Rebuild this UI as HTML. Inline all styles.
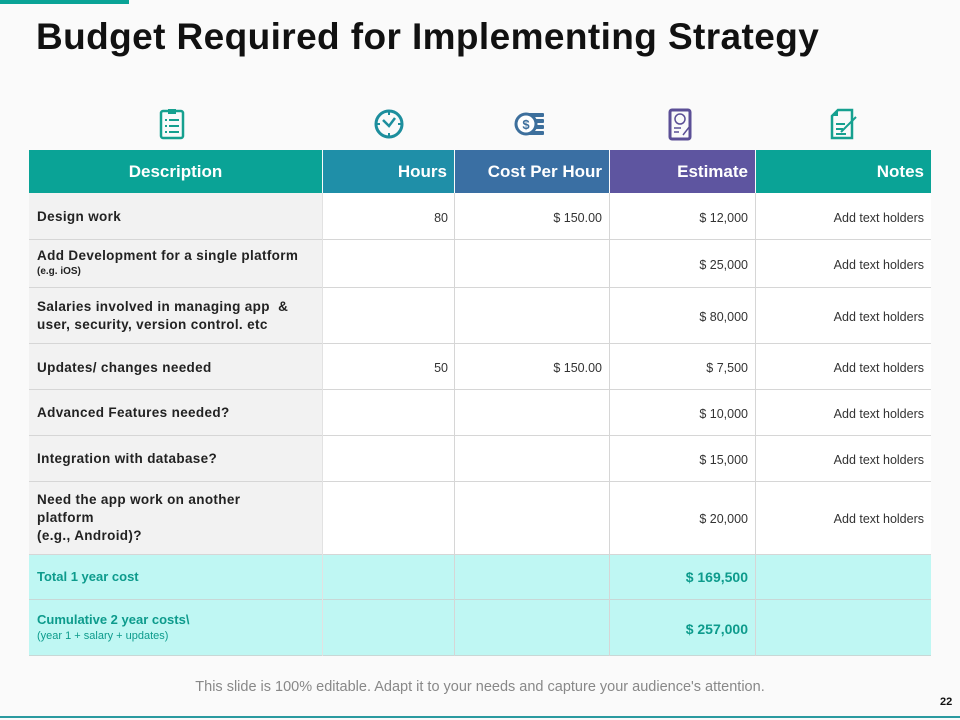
<!DOCTYPE html>
<html><head><meta charset="utf-8">
<style>
*{margin:0;padding:0;box-sizing:border-box}
body{width:960px;height:720px;position:relative;overflow:hidden;background:#fafafa;font-family:"Liberation Sans",sans-serif;}
.a{position:absolute}
.h{position:absolute;top:150px;height:43px;color:#fff;font-weight:bold;font-size:17px;line-height:43px}
.d{position:absolute;left:29px;width:293px;background:#f2f2f2;border-bottom:1px solid #d6d6d6}
.r{position:absolute;left:322px;width:609px;background:#fff;border-bottom:1px solid #d6d6d6}
.v{position:absolute;width:1px;background:#d6d6d6}
.dt{position:absolute;left:37px;font-size:13.5px;font-weight:bold;color:#222;line-height:18px;letter-spacing:0.35px;white-space:nowrap}
.num{position:absolute;font-size:12.5px;color:#333;text-align:right}
</style></head><body>
<div class="a" style="left:0;top:0;width:129px;height:4px;background:#0aa396"></div>
<div class="a" style="left:36px;top:16px;font-size:37px;font-weight:bold;color:#111;letter-spacing:0.4px">Budget Required for Implementing Strategy</div>

<svg class="a" style="left:158px;top:108px" width="28" height="32" viewBox="0 0 28 32"><rect x="3" y="3" width="22" height="27" rx="2" fill="none" stroke="#16a08f" stroke-width="2.5"/><rect x="10" y="1" width="8" height="5" fill="#16a08f"/><g stroke="#16a08f" stroke-width="2"><line x1="7" y1="12" x2="9" y2="12"/><line x1="11" y1="12" x2="21" y2="12"/><line x1="7" y1="18" x2="9" y2="18"/><line x1="11" y1="18" x2="21" y2="18"/><line x1="7" y1="24" x2="9" y2="24"/><line x1="11" y1="24" x2="21" y2="24"/></g></svg>
<svg class="a" style="left:373px;top:108px" width="32" height="32" viewBox="0 0 32 32"><circle cx="16" cy="16" r="13" fill="none" stroke="#1d8e9d" stroke-width="3"/><path d="M10 12 L16 18 L22 10" fill="none" stroke="#1d8e9d" stroke-width="2.5"/><g stroke="#1d8e9d" stroke-width="2"><line x1="16" y1="4" x2="16" y2="7"/><line x1="4" y1="16" x2="7" y2="16"/><line x1="25" y1="16" x2="28" y2="16"/><line x1="16" y1="25" x2="16" y2="28"/></g></svg>
<svg class="a" style="left:514px;top:110px" width="32" height="28" viewBox="0 0 32 28"><g fill="#3d6f9c"><rect x="14" y="3" width="16" height="4" rx="1"/><rect x="16" y="9" width="14" height="4" rx="1"/><rect x="16" y="15" width="14" height="4" rx="1"/><rect x="14" y="21" width="16" height="4" rx="1"/></g><circle cx="12" cy="14" r="10" fill="#fff" stroke="#3d6f9c" stroke-width="3"/><text x="12" y="19" font-size="13" font-weight="bold" fill="#3d6f9c" text-anchor="middle" font-family="Liberation Sans">$</text></svg>
<svg class="a" style="left:667px;top:108px" width="28" height="34" viewBox="0 0 28 34"><rect x="3" y="2" width="20" height="29" rx="2" fill="none" stroke="#5b4f96" stroke-width="3"/><circle cx="13" cy="11" r="5" fill="none" stroke="#5b4f96" stroke-width="1.5"/><g stroke="#5b4f96" stroke-width="1.5"><line x1="7" y1="20" x2="14" y2="20"/><line x1="7" y1="24" x2="12" y2="24"/><line x1="16" y1="27" x2="23" y2="18"/></g></svg>
<svg class="a" style="left:829px;top:108px" width="30" height="32" viewBox="0 0 30 32"><path d="M9 2 H23 V30 H3 V8 Z" fill="none" stroke="#16a08f" stroke-width="2.5"/><path d="M3 8 H9 V2" fill="#16a08f"/><g stroke="#16a08f" stroke-width="2"><line x1="7" y1="16" x2="16" y2="16"/><line x1="7" y1="21" x2="14" y2="21"/><line x1="7" y1="26" x2="17" y2="26"/><line x1="12" y1="24" x2="27" y2="9"/></g></svg>

<div class="h" style="left:29px;width:293px;background:#0aa396;text-align:center">Description</div>
<div class="h" style="left:323px;width:131px;background:#1f8fa8;text-align:right;padding-right:7px">Hours</div>
<div class="h" style="left:455px;width:154px;background:#3a6fa3;text-align:right;padding-right:7px">Cost Per Hour</div>
<div class="h" style="left:610px;width:145px;background:#5e55a0;text-align:right;padding-right:7px">Estimate</div>
<div class="h" style="left:756px;width:175px;background:#0aa396;text-align:right;padding-right:7px">Notes</div>

<div class="d" style="top:193px;height:47px"></div><div class="r" style="top:193px;height:47px"></div>
<div class="d" style="top:240px;height:48px"></div><div class="r" style="top:240px;height:48px"></div>
<div class="d" style="top:288px;height:56px"></div><div class="r" style="top:288px;height:56px"></div>
<div class="d" style="top:344px;height:46px"></div><div class="r" style="top:344px;height:46px"></div>
<div class="d" style="top:390px;height:46px"></div><div class="r" style="top:390px;height:46px"></div>
<div class="d" style="top:436px;height:46px"></div><div class="r" style="top:436px;height:46px"></div>
<div class="d" style="top:482px;height:73px"></div><div class="r" style="top:482px;height:73px"></div>
<div class="a" style="left:29px;top:555px;width:902px;height:45px;background:#bff7f3;border-bottom:1px solid #c8d8d6"></div>
<div class="a" style="left:29px;top:600px;width:902px;height:56px;background:#bff7f3;border-bottom:1px solid #c8d8d6"></div>
<div class="v" style="left:322px;top:193px;height:463px;background:#e2e2e2"></div>
<div class="v" style="left:454px;top:193px;height:463px"></div>
<div class="v" style="left:609px;top:193px;height:463px"></div>
<div class="v" style="left:755px;top:193px;height:463px"></div>

<div class="dt" style="top:208px">Design work</div>
<div class="dt" style="top:247px">Add Development for a single platform<br><span style="font-size:10px;line-height:14px;display:block;letter-spacing:0">(e.g. iOS)</span></div>
<div class="dt" style="top:298px">Salaries involved in managing app &nbsp;&amp;<br>user, security, version control. etc</div>
<div class="dt" style="top:359px">Updates/ changes needed</div>
<div class="dt" style="top:404px">Advanced Features needed?</div>
<div class="dt" style="top:450px">Integration with database?</div>
<div class="dt" style="top:491px">Need the app work on another<br>platform<br>(e.g., Android)?</div>
<div class="dt" style="top:568px;color:#0d9b8c;font-size:13px;letter-spacing:0">Total 1 year cost</div>
<div class="dt" style="top:611px;color:#0d9b8c;font-size:13px;letter-spacing:0">Cumulative 2 year costs\<br><span style="font-size:11px;font-weight:normal;line-height:15px;display:block">(year 1 + salary + updates)</span></div>

<div class="num" style="left:322px;width:126px;top:211px">80</div>
<div class="num" style="left:454px;width:148px;top:211px">$ 150.00</div>
<div class="num" style="left:322px;width:126px;top:361px">50</div>
<div class="num" style="left:454px;width:148px;top:361px">$ 150.00</div>
<div class="num" style="left:609px;width:139px;top:211px">$ 12,000</div>
<div class="num" style="left:609px;width:139px;top:258px">$ 25,000</div>
<div class="num" style="left:609px;width:139px;top:310px">$ 80,000</div>
<div class="num" style="left:609px;width:139px;top:361px">$ 7,500</div>
<div class="num" style="left:609px;width:139px;top:407px">$ 10,000</div>
<div class="num" style="left:609px;width:139px;top:453px">$ 15,000</div>
<div class="num" style="left:609px;width:139px;top:512px">$ 20,000</div>
<div class="num" style="left:609px;width:139px;top:569px;font-size:14px;font-weight:bold;color:#0d9b8c">$ 169,500</div>
<div class="num" style="left:609px;width:139px;top:621px;font-size:14px;font-weight:bold;color:#0d9b8c">$ 257,000</div>
<div class="num" style="left:755px;width:169px;top:211px">Add text holders</div>
<div class="num" style="left:755px;width:169px;top:258px">Add text holders</div>
<div class="num" style="left:755px;width:169px;top:310px">Add text holders</div>
<div class="num" style="left:755px;width:169px;top:361px">Add text holders</div>
<div class="num" style="left:755px;width:169px;top:407px">Add text holders</div>
<div class="num" style="left:755px;width:169px;top:453px">Add text holders</div>
<div class="num" style="left:755px;width:169px;top:512px">Add text holders</div>

<div class="a" style="left:0;width:960px;top:679px;text-align:center;font-size:14.5px;color:#888">This slide is 100% editable. Adapt it to your needs and capture your audience's attention.</div>
<div class="a" style="left:940px;top:696px;font-size:11px;font-weight:bold;color:#111">22</div>
<div class="a" style="left:0;top:716px;width:960px;height:2px;background:#2a9aa0"></div>
</body></html>
